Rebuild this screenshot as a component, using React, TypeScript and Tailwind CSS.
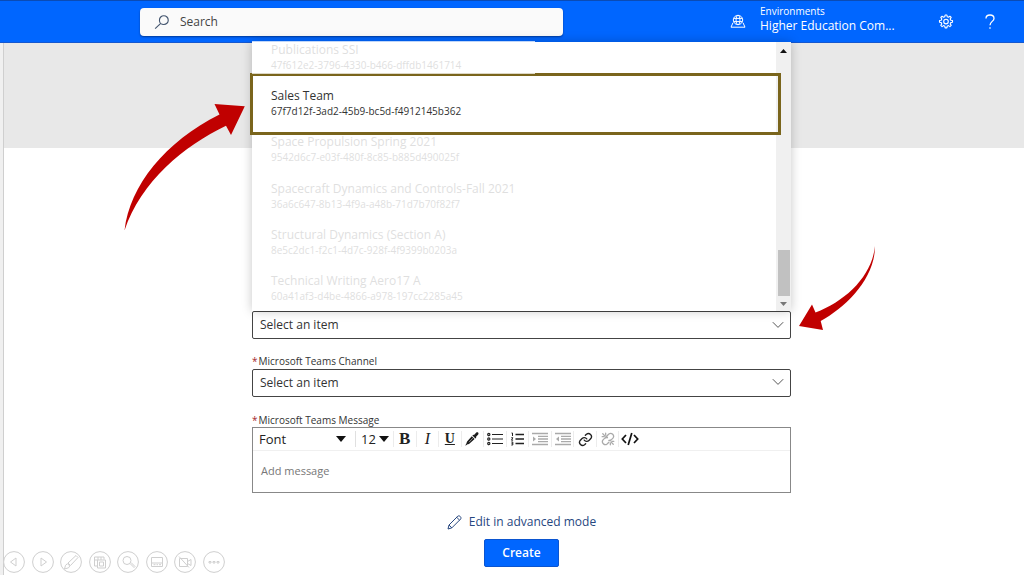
import { useState } from "react";
import type { ReactNode } from "react";

const teams = [
  { name: "Publications SSI", id: "47f612e2-3796-4330-b466-dffdb1461714" },
  { name: "Sales Team", id: "67f7d12f-3ad2-45b9-bc5d-f4912145b362" },
  { name: "Space Propulsion Spring 2021", id: "9542d6c7-e03f-480f-8c85-b885d490025f" },
  { name: "Spacecraft Dynamics and Controls-Fall 2021", id: "36a6c647-8b13-4f9a-a48b-71d7b70f82f7" },
  { name: "Structural Dynamics (Section A)", id: "8e5c2dc1-f2c1-4d7c-928f-4f9399b0203a" },
  { name: "Technical Writing Aero17 A", id: "60a41af3-d4be-4866-a978-197cc2285a45" },
];

const selectClass =
  "block h-7 w-full appearance-none rounded-xs border border-[#444] bg-white px-[7px] text-[12px] leading-5 text-[#333]";

function Header() {
  return (
    <header className="flex h-[43px] items-center border-t border-b border-t-[#0a4bb5] border-b-[#1558cf] bg-[#0066ff] pr-7 pl-[140px] text-white">
      <div className="flex h-7 w-[423px] items-center gap-2.5 rounded-sm bg-[#fafafa] pl-[14px] shadow-[0_1px_2px_#003a99]">
        <svg width="17" height="16" viewBox="0 0 17 16" fill="none" stroke="#42546e" strokeWidth="1.2">
          <circle cx="10.5" cy="6" r="4.7" />
          <path d="M7.2 9.4 1.2 15" />
        </svg>
        <input
          type="search"
          aria-label="Search"
          placeholder="Search"
          className="w-full bg-transparent text-[12px] text-[#333] placeholder:text-[#444] focus:outline-none"
        />
      </div>
      <div className="ml-auto flex items-center">
        <svg width="16" height="15" viewBox="0 0 16 15" fill="none" stroke="white" strokeWidth="1">
          <circle cx="8" cy="6" r="4.7" />
          <ellipse cx="8" cy="6" rx="2" ry="4.7" />
          <path d="M3.7 4.4h8.6M3.7 7.6h8.6M3 8.7 1 13.2h14l-2-4.5" />
        </svg>
        <div className="ml-[14px] w-[136px] pb-1">
          <p className="text-[10px] leading-[13px]">Environments</p>
          <p className="text-[12px] leading-[16px] font-medium whitespace-nowrap">Higher Education Com...</p>
        </div>
        <button type="button" aria-label="Settings" className="ml-[42px]">
          <svg width="16" height="16" viewBox="0 0 16 16" fill="none" stroke="white" strokeWidth="1.1" strokeLinejoin="round">
            <path d="M6.8 2.7 7.1 1h1.8l.3 1.7 1.3.5 1.4-1 1.3 1.3-1 1.4.6 1.3 1.7.3v1.8l-1.7.3-.6 1.3 1 1.4-1.3 1.3-1.4-1-1.3.6-.3 1.7H7.1l-.3-1.7-1.3-.6-1.4 1L2.8 11.3l1-1.4-.6-1.3L1.5 8.3V6.5l1.7-.3.6-1.3-1-1.4 1.3-1.3 1.4 1z" />
            <circle cx="8" cy="7.6" r="2.3" />
          </svg>
        </button>
        <button type="button" aria-label="Help" className="ml-[30px]">
          <svg width="12" height="16" viewBox="0 0 12 16" fill="none" stroke="white" strokeWidth="1.3">
            <path d="M2 4.5C2 2.3 3.7 1 6 1s4 1.3 4 3.4C10 7.3 6 7.6 6 11.3" />
            <path d="M6 13.2v1.6" />
          </svg>
        </button>
      </div>
    </header>
  );
}

function Chevron() {
  return (
    <svg
      className="pointer-events-none absolute top-[10px] right-[7px]"
      width="12"
      height="8"
      viewBox="0 0 12 8"
      fill="none"
      stroke="#555"
    >
      <path d="M.8 1.2 6 6.4l5.2-5.2" />
    </svg>
  );
}

function TeamList() {
  return (
    <div className="absolute bottom-full left-0 z-10 h-[269px] w-full bg-white shadow-[0_0_10px_rgba(0,0,0,0.22)]">
      <div className="flex h-full">
        <ul className="flex flex-1 flex-col justify-between pb-[7px] pl-[19px]">
          {teams.map((team) => (
            <li
              key={team.id}
              className={team.name === "Sales Team" ? "z-10 text-[#333]" : "z-10 text-[#dfdfdf]"}
            >
              <p className="text-[12px] leading-[16px]">{team.name}</p>
              <p className="text-[10px] leading-[15px]">{team.id}</p>
            </li>
          ))}
        </ul>
        <div className="flex w-[15px] flex-col items-center bg-[#f0f0f0] pt-[7px] pb-[5px]">
          <svg width="7" height="4" viewBox="0 0 7 4">
            <path d="M0 4 3.5 0 7 4z" fill="#111" />
          </svg>
          <div className="mt-auto h-[46px] w-3 bg-[#c1c1c1]" />
          <svg className="mt-1.5" width="7" height="4" viewBox="0 0 7 4">
            <path d="M0 0h7L3.5 4z" fill="#777" />
          </svg>
        </div>
      </div>
      {/* highlighted entry, faded where the veil crosses its top edge */}
      <div className="absolute top-[31px] -left-0.5 h-[62px] w-[531px] border-3 border-[#7a651c]" />
      <div className="absolute -top-px left-0 h-[33px] w-[283px] bg-white/75" />
    </div>
  );
}

function Tool({ label, children }: { label: string; children: ReactNode }) {
  return (
    <button
      type="button"
      aria-label={label}
      className="flex h-4 flex-1 items-center justify-center border-l border-[#ececec] text-[#222]"
    >
      {children}
    </button>
  );
}

function Caret() {
  return (
    <svg className="pointer-events-none absolute top-[5px] right-0" width="10" height="6" viewBox="0 0 10 6">
      <path d="M0 0h10L5 6z" fill="#111" />
    </svg>
  );
}

function IndentIcon({ flip }: { flip?: boolean }) {
  return (
    <svg width="16" height="14" viewBox="0 0 16 14" fill="none" stroke="#aaa" strokeWidth="1.3">
      <path d="M0 1.5h16M6 4.3h10M6 7h10M6 9.7h10M0 12.5h16" />
      <path d={flip ? "M4 4.5 1 7l3 2.5z" : "M1 4.5 4 7 1 9.5z"} fill="#aaa" stroke="none" />
    </svg>
  );
}

function Toolbar() {
  return (
    <div className="flex h-[23px] items-center border-b border-[#f0f0f0] pl-1.5 text-[#222]">
      <div className="relative w-[87px]">
        <select aria-label="Font" className="block h-4 w-full appearance-none text-[13px] leading-4">
          <option>Font</option>
        </select>
        <Caret />
      </div>
      <div className="relative ml-[9px] w-[34px] border-l border-[#e0e0e0] pl-[5px]">
        <select aria-label="Font size" className="block h-4 w-full appearance-none text-[13px] leading-4">
          <option>12</option>
        </select>
        <Caret />
      </div>
      <div className="ml-1 flex w-[248px]">
        <Tool label="Bold">
          <span className="font-['Liberation_Serif',serif] text-[17px] leading-4 font-bold">B</span>
        </Tool>
        <Tool label="Italic">
          <span className="font-['Liberation_Serif',serif] text-[16px] leading-4 italic">I</span>
        </Tool>
        <Tool label="Underline">
          <span className="font-['Liberation_Serif',serif] text-[14px] leading-4 font-semibold underline">U</span>
        </Tool>
        <Tool label="Text color">
          <svg width="14" height="14" viewBox="0 0 14 14" fill="#1b1b1b">
            <path d="M9 3 11.3.6c1.4-.9 2.8.5 1.9 1.9L10.9 5l.4.8-.9.8-3-3 .8-.9zM6.8 4.3l2.8 2.8-5 4.5c-1 .8-1.9.6-2.7 1.1L.8 13.6l-.5-.4.9-1.2c.5-.9.3-1.7 1.1-2.7z" />
            <path d="M4 10.2 7.8 6.2" stroke="white" strokeWidth=".5" />
          </svg>
        </Tool>
        <Tool label="Bulleted list">
          <svg width="16" height="14" viewBox="0 0 16 14" fill="none" stroke="#222" strokeWidth="1.2">
            <path d="M5 2.5h11M5 7h11M5 11.5h11" />
            <circle cx="1.8" cy="2.5" r="1.1" />
            <circle cx="1.8" cy="7" r="1.1" />
            <circle cx="1.8" cy="11.5" r="1.1" />
          </svg>
        </Tool>
        <Tool label="Numbered list">
          <svg width="13" height="14" viewBox="0 0 13 14" fill="none" stroke="#222" strokeWidth="1.5">
            <path d="M4.5 2.5H13M4.5 7H13M4.5 11.5H13" />
            <path d="M.5 1h1v3M.3 5.7h1.5L.5 8.2h1.6M.3 10h1.5v3H.3M.6 11.5h1" strokeWidth="1" />
          </svg>
        </Tool>
        <Tool label="Outdent">
          <IndentIcon />
        </Tool>
        <Tool label="Indent">
          <IndentIcon flip />
        </Tool>
        <Tool label="Link">
          <svg width="15" height="15" viewBox="0 0 24 24" fill="none" stroke="#222" strokeWidth="2.2" strokeLinecap="round">
            <path d="M10 13a5 5 0 0 0 7.5.5l3-3a5 5 0 0 0-7-7l-1.7 1.7" />
            <path d="M14 11a5 5 0 0 0-7.5-.5l-3 3a5 5 0 0 0 7 7l1.7-1.7" />
          </svg>
        </Tool>
        <Tool label="Unlink">
          <svg width="14" height="14" viewBox="0 0 24 24" fill="none" stroke="#aaa" strokeWidth="2.2" strokeLinecap="round">
            <path d="M11 9.5 8.5 7M10.5 6.5l3-3a5 5 0 0 1 7 7l-3 3a5 5 0 0 1-4 1" />
            <path d="m13.5 17.5-3 3a5 5 0 0 1-7-7l3-3a5 5 0 0 1 4-1" />
            <path d="M3 3l4 4M2 8h3M8 2v3M17 17l4 4M16 19v3M19 16h3" />
          </svg>
        </Tool>
        <Tool label="Code view">
          <svg width="18" height="14" viewBox="0 0 18 14" fill="none" stroke="#111" strokeWidth="1.7">
            <path d="M5 3 1.3 7 5 11M13 3l3.7 4L13 11M10.8 1 7.2 13" />
          </svg>
        </Tool>
      </div>
    </div>
  );
}

function RequiredLabel({ htmlFor, children }: { htmlFor: string; children: ReactNode }) {
  return (
    <label htmlFor={htmlFor} className="block text-[10px] leading-[14px] text-[#333]">
      <span className="mr-px text-[#a4262c]">*</span>
      {children}
    </label>
  );
}

const showControls: { label: string; icon: ReactNode }[] = [
  { label: "Previous slide", icon: <path d="M13 7v8l-5.5-4z" /> },
  { label: "Next slide", icon: <path d="M9 7v8l5.5-4z" /> },
  {
    label: "Pen",
    icon: <path d="m16 4.5 2 2-7.5 8-2.5-2.5zM7.5 12.7l2.3 2.3-1.3 1.8-4 1.2 1-3.7z" />,
  },
  {
    label: "See all slides",
    icon: <path d="M8.5 9h8v8h-8zM10.5 11h4v4h-4zM8 15H5.5V6H15v2.5M5.5 9h3M9 6v3M12 6v3" />,
  },
  { label: "Zoom", icon: <path d="M10 5.5a4 4 0 1 0 0 8 4 4 0 0 0 0-8zM13 12.5l4 4 1-1-4-4" /> },
  { label: "Subtitles", icon: <path d="M5.5 6.5h11v9h-11zM5.5 12h11M7.5 13.7h2M10.5 13.7h1.5M13 13.7h2" /> },
  { label: "Camera", icon: <path d="M5.5 7.5h8v8h-8zM13.5 10.5l3.5-2v6l-3.5-2M5 5.5l10 11" /> },
  { label: "More", icon: <path d="M6 10.5h2v1.5H6zM10 10.5h2v1.5h-2zM14 10.5h2v1.5h-2z" /> },
];

function SlideControls() {
  return (
    <div className="absolute bottom-0.5 left-[3px] flex w-[222px] justify-between">
      {showControls.map((control) => (
        <button key={control.label} type="button" aria-label={control.label}>
          <svg width="22" height="22" viewBox="0 0 22 22" fill="none" stroke="#cfcfcf">
            <circle cx="11" cy="11" r="10.4" fill="white" />
            {control.icon}
          </svg>
        </button>
      ))}
    </div>
  );
}

export default function App() {
  const [message, setMessage] = useState("");

  return (
    <div className="relative flex min-h-screen flex-col bg-[#f0f0f0] font-['Open_Sans','Noto_Sans',sans-serif]">
      <Header />
      <main className="ml-[3px] flex-1 border-l border-[#cfcfcf] bg-white">
        <div className="h-[105px] bg-[#e8e8e8]" />
        <form
          className="mx-auto w-full max-w-[554px] pt-[163px] pl-[15px]"
          onSubmit={(e) => e.preventDefault()}
        >
          <div className="relative">
            <select aria-label="Microsoft Teams Team" className={selectClass}>
              <option>Select an item</option>
            </select>
            <Chevron />
            <TeamList />
            <svg
              className="absolute right-full bottom-[108px] z-20 mr-[7px]"
              width="121"
              height="127"
              viewBox="124 105 121 127"
              fill="#c00000"
            >
              <path d="M124.5 231.5C130 186 165 143 219.5 115.5L214.5 105l30.3 2.2L231 136l-5-9.3C184 147 141 182 124.5 231.5z" />
            </svg>
            <svg
              className="absolute bottom-2 left-full z-20 ml-2"
              width="77"
              height="85"
              viewBox="799 246 77 85"
              fill="#c00000"
            >
              <path d="M875 246C872 276 846 301 815.5 312.5L812 304.5 799 326l24 4-2.3-9C846 307 875 279 875 246z" />
            </svg>
          </div>

          <div className="pt-[15px] pb-px">
            <RequiredLabel htmlFor="channel">Microsoft Teams Channel</RequiredLabel>
            <div className="relative pt-px">
              <select id="channel" className={selectClass}>
                <option>Select an item</option>
              </select>
              <Chevron />
            </div>
          </div>

          <div className="pt-[15px]">
            <RequiredLabel htmlFor="message">Microsoft Teams Message</RequiredLabel>
            <div className="border border-[#888]">
              <Toolbar />
              <textarea
                id="message"
                rows={1}
                value={message}
                onChange={(e) => setMessage(e.target.value)}
                placeholder="Add message"
                className="block h-[41px] w-full resize-none px-2 py-3 text-[11px] leading-4 text-[#333] placeholder:text-[#777] focus:outline-none"
              />
            </div>
          </div>

          <div className="flex flex-col items-center gap-2 pt-5">
            <a href="#advanced" className="flex items-center gap-[7px] text-[12px] leading-[18px] text-[#27477f]">
              <svg width="15" height="15" viewBox="0 0 15 15" fill="none" stroke="#27477f">
                <path d="M1 14 2 10 10.8 1.2c1.5-1.2 4 1 2.9 2.8L4.8 12.9zM2 10l2.8 2.9M9.7 2.3l2.9 2.9" />
              </svg>
              Edit in advanced mode
            </a>
            <button
              type="submit"
              className="h-7 w-[75px] rounded-xs border border-[#0b55d0] bg-[#0066ff] text-[12px] font-semibold text-white"
            >
              Create
            </button>
          </div>
        </form>
      </main>
      <SlideControls />
    </div>
  );
}
